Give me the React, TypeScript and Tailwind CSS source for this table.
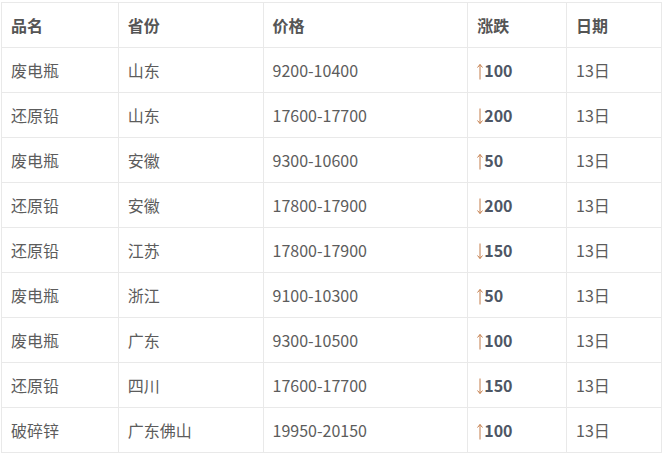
const rows = [
  { name: '废电瓶', prov: '山东', price: '9200-10400', up: true, diff: '100' },
  { name: '还原铅', prov: '山东', price: '17600-17700', up: false, diff: '200' },
  { name: '废电瓶', prov: '安徽', price: '9300-10600', up: true, diff: '50' },
  { name: '还原铅', prov: '安徽', price: '17800-17900', up: false, diff: '200' },
  { name: '还原铅', prov: '江苏', price: '17800-17900', up: false, diff: '150' },
  { name: '废电瓶', prov: '浙江', price: '9100-10300', up: true, diff: '50' },
  { name: '废电瓶', prov: '广东', price: '9300-10500', up: true, diff: '100' },
  { name: '还原铅', prov: '四川', price: '17600-17700', up: false, diff: '150' },
  { name: '破碎锌', prov: '广东佛山', price: '19950-20150', up: true, diff: '100' },
];

// thin arrow like the one in the source font
function Arrow({ up }: { up: boolean }) {
  return (
    <svg width="6" height="17" viewBox="0 0 6 17" className="inline-block align-[-3px] mr-[1px]">
      <g stroke="#c47d4a" strokeWidth="1" fill="none" className={up ? '' : 'origin-center rotate-180'}>
        <path d="M3 1.5V16.5" />
        <path d="M0.5 4.5L3 1.5L5.5 4.5" />
      </g>
    </svg>
  );
}

export default function App() {
  return (
    <div
      className="bg-white pt-[2px] pl-[1px] w-[664px] h-[458px]"
      style={{ fontFamily: '"Noto Sans CJK SC", "Liberation Sans", sans-serif' }}
    >
      <table className="border-collapse w-[661px] text-[16px] text-[#5c5c5c]">
        <colgroup>
          <col className="w-[117px]" />
          <col className="w-[145px]" />
          <col className="w-[205px]" />
          <col className="w-[99px]" />
          <col className="w-[95px]" />
        </colgroup>
        <thead>
          <tr className="h-[45px]">
            {['品名', '省份', '价格', '涨跌', '日期'].map((h) => (
              <th key={h} className="border border-[#e9e9e9] px-[9px] pb-[1px] text-left font-bold text-[#555]">
                {h}
              </th>
            ))}
          </tr>
        </thead>
        <tbody>
          {rows.map((r, i) => (
            <tr key={i} className="h-[45px]">
              <td className="border border-[#e9e9e9] px-[9px] pb-[1px]">{r.name}</td>
              <td className="border border-[#e9e9e9] px-[9px] pb-[1px]">{r.prov}</td>
              <td className="border border-[#e9e9e9] px-[9px] pb-[1px]">{r.price}</td>
              <td className="border border-[#e9e9e9] px-[9px] pb-[1px]">
                <Arrow up={r.up} />
                <span className="font-bold text-[#4e5664]">{r.diff}</span>
              </td>
              <td className="border border-[#e9e9e9] px-[9px] pb-[1px]">13日</td>
            </tr>
          ))}
        </tbody>
      </table>
    </div>
  );
}
